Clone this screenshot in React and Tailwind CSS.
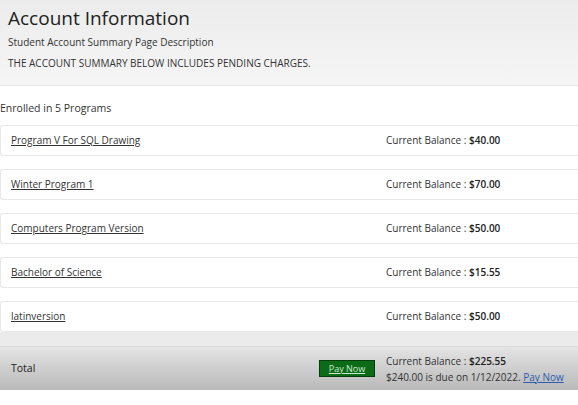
import React from "react";

const programs = [
  { name: "Program V For SQL Drawing", bal: "$40.00" },
  { name: "Winter Program 1", bal: "$70.00" },
  { name: "Computers Program Version", bal: "$50.00" },
  { name: "Bachelor of Science", bal: "$15.55" },
  { name: "latinversion", bal: "$50.00" },
];

export default function App() {
  return (
    <div className="w-[578px] h-[405px] bg-white overflow-hidden text-[#333]" style={{ fontFamily: '"Open Sans", "Liberation Sans", sans-serif' }}>
      {/* header */}
      <div className="h-[86px] bg-gradient-to-b from-[#ececec] to-[#f5f5f5] px-2 pt-[5px] border-b border-[#e6e6e6]">
        <h1 className="text-[19px] leading-[26px] text-[#222]">Account Information</h1>
        <p className="text-[10px] leading-[14px] mt-[4px]">Student Account Summary Page Description</p>
        <p className="text-[10px] leading-[14px] mt-[7px]">THE ACCOUNT SUMMARY BELOW INCLUDES PENDING CHARGES.</p>
      </div>

      <div className="pt-[15px] text-[10.5px] leading-[14px]">Enrolled in 5 Programs</div>

      <div className="mt-[10px] flex flex-col gap-[13px]">
        {programs.map((p) => (
          <div key={p.name} className="h-[31px] flex items-center rounded-l-[3px] border border-r-0 border-[#e8e8e8] bg-white">
            <div className="flex-1 pl-[10px] text-[10px] underline text-[#333]">{p.name}</div>
            <div className="w-[192px] text-[10px]">
              Current Balance : <span className="font-semibold text-[#222]">{p.bal}</span>
            </div>
          </div>
        ))}
      </div>

      <div className="h-[15px] bg-[#ebebeb] border-b border-[#dcdcdc]"></div>

      <div className="h-[43px] flex items-center bg-gradient-to-b from-[#e4e4e4] to-[#b9b9b9]">
        <div className="flex-1 pl-[11px] text-[10.5px] text-[#222]">Total</div>
        <div className="w-[56px] h-[17px] mr-[11px] bg-[#0b6b17] border border-[#063d0c] flex items-center justify-center">
          <span className="text-[9px] underline text-[#cfe8cf]">Pay Now</span>
        </div>
        <div className="w-[192px] text-[10px] leading-[16px]">
          <div>Current Balance : <span className="font-semibold text-[#222]">$225.55</span></div>
          <div>$240.00 is due on 1/12/2022. <span className="underline text-[#2a5db0]">Pay Now</span></div>
        </div>
      </div>
    </div>
  );
}
